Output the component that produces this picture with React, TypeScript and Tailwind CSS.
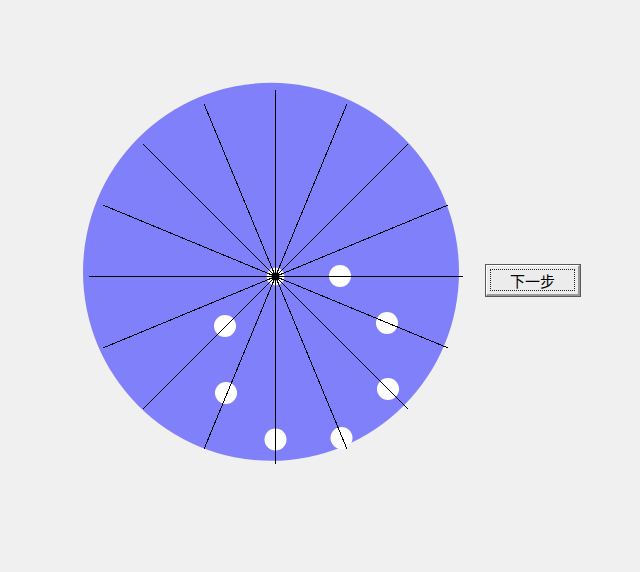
import React from "react";

const CX = 275.5;
const CY = 276.5;
const LEN = 187;

// white markers sitting on the wheel
const dots: [number, number][] = [
  [340, 276],
  [387, 323],
  [388, 389],
  [341.5, 438],
  [275.5, 439.5],
  [226, 393],
  [225, 326],
];

const spokes = Array.from({ length: 16 }, (_, i) => {
  const a = (i * Math.PI) / 8;
  return {
    x2: CX + LEN * Math.cos(a),
    y2: CY + LEN * Math.sin(a),
  };
});

const Wheel = () => (
  <svg width={400} height={400} viewBox="70 70 400 400" className="block shrink-0">
    <ellipse cx={271} cy={271.8} rx={188} ry={189} fill="#8080fa" />
    {dots.map(([x, y], i) => (
      <circle key={i} cx={x} cy={y} r={11} fill="#ffffff" />
    ))}
    <circle cx={CX} cy={CY} r={9} fill="#ffffff" />
    {spokes.map((s, i) => (
      <line
        key={i}
        x1={CX}
        y1={CY}
        x2={s.x2}
        y2={s.y2}
        stroke="#000000"
        strokeWidth={1}
        shapeRendering="crispEdges"
      />
    ))}
    <circle cx={CX} cy={CY} r={4} fill="#000000" />
  </svg>
);

export default function App() {
  return (
    <div className="w-[640px] h-[572px] bg-[#f0f0f0] overflow-hidden">
      <div className="flex items-start pt-[70px] pl-[70px]">
        <Wheel />
        <button className="ml-[15px] mt-[194px] w-[96px] h-[33px] border border-[#5a5a5a] bg-[#ececec] p-0">
          <div className="h-full w-full border-t border-l border-t-white border-l-white border-b-2 border-r-2 border-b-[#9a9a9a] border-r-[#9a9a9a] p-[3px]">
            <div className="h-full w-full border border-dotted border-[#222222] flex items-center justify-center text-[15px] leading-none text-black font-['Noto_Sans_CJK_SC',sans-serif]">
              下一步
            </div>
          </div>
        </button>
      </div>
    </div>
  );
}
